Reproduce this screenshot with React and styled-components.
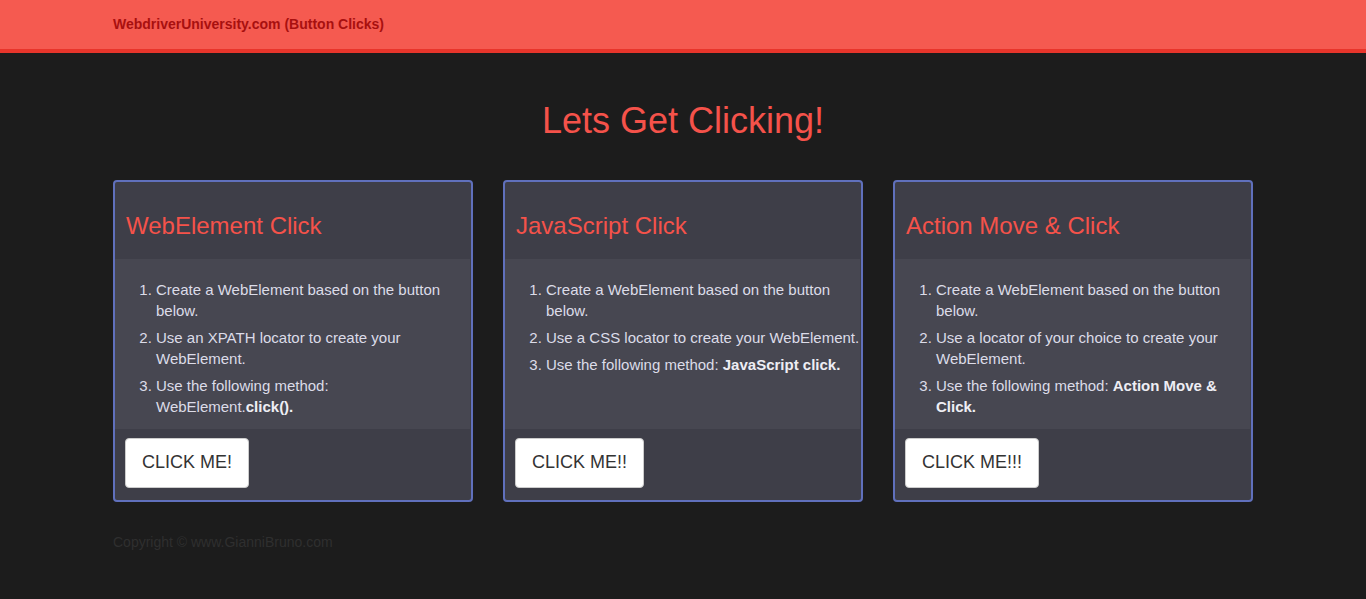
import React from "react";
import styled, { createGlobalStyle } from "styled-components";

const Global = createGlobalStyle`
  html, body { margin: 0; padding: 0; }
  body {
    background: #1c1c1c;
    font-family: "Liberation Sans", Arial, Helvetica, sans-serif;
    font-size: 14px;
    line-height: 1.42857;
    color: #333;
  }
  * { box-sizing: border-box; }
`;

const Navbar = styled.nav`
  height: 53px;
  background: #f55a50;
  border-bottom: 4px solid #e8352b;
`;

const Container = styled.div`
  width: 1140px;
  margin: 0 auto;
`;

const Brand = styled.div`
  height: 49px;
  display: flex;
  align-items: center;
  font-size: 14px;
  font-weight: bold;
  color: #a8100f;
`;

const Title = styled.h1`
  margin: 48px 0 0;
  height: 78px;
  text-align: center;
  font-size: 36px;
  font-weight: normal;
  line-height: 40px;
  color: #f5524a;
`;

const Cards = styled.div`
  display: grid;
  grid-template-columns: repeat(3, 360px);
  gap: 30px;
  margin-top: 1px;
`;

const Card = styled.div`
  display: flex;
  flex-direction: column;
  border: 2px solid #6070bc;
  border-radius: 4px;
  background: #3e3e48;
  overflow: hidden;
`;

const CardHead = styled.div`
  padding: 31px 11px 20px;
`;

const CardTitle = styled.h2`
  margin: 0;
  font-size: 24px;
  font-weight: normal;
  line-height: 26px;
  color: #f5524a;
`;

const CardBody = styled.div`
  flex: 1;
  background: #474751;
  padding: 20px 0 6px;
  margin-right: 1px;
`;

const Steps = styled.ol`
  margin: 0;
  padding: 0 0 0 41px;
  font-size: 15px;
  line-height: 21px;
  color: #dcdce8;

  li { margin-bottom: 6px; }
  b { color: #eeeef4; }
`;

const CardFoot = styled.div`
  padding: 9px 10px 12px;
`;

const Button = styled.button`
  display: inline-block;
  background: #fff;
  border: 1px solid #ccc;
  border-radius: 4px;
  padding: 9px 16px 11px;
  font-family: "Liberation Sans", Arial, sans-serif;
  font-size: 18px;
  line-height: 28px;
  color: #333;
  cursor: pointer;
`;

const Copyright = styled.p`
  margin: 30px 0 0;
  font-size: 14px;
  line-height: 20px;
  color: #2f2f2f;
`;

const cards = [
  {
    title: "WebElement Click",
    steps: [
      "Create a WebElement based on the button below.",
      "Use an XPATH locator to create your WebElement.",
      <>Use the following method: WebElement.<b>click().</b></>,
    ],
    button: "CLICK ME!",
  },
  {
    title: "JavaScript Click",
    steps: [
      "Create a WebElement based on the button below.",
      "Use a CSS locator to create your WebElement.",
      <>Use the following method: <b>JavaScript click.</b></>,
    ],
    button: "CLICK ME!!",
  },
  {
    title: "Action Move & Click",
    steps: [
      "Create a WebElement based on the button below.",
      "Use a locator of your choice to create your WebElement.",
      <>Use the following method: <b>Action Move &amp; Click.</b></>,
    ],
    button: "CLICK ME!!!",
  },
];

export default function App() {
  return (
    <>
      <Global />
      <Navbar>
        <Container>
          <Brand>WebdriverUniversity.com (Button Clicks)</Brand>
        </Container>
      </Navbar>
      <Container>
        <Title>Lets Get Clicking!</Title>
        <Cards>
          {cards.map((c) => (
            <Card key={c.title}>
              <CardHead>
                <CardTitle>{c.title}</CardTitle>
              </CardHead>
              <CardBody>
                <Steps>
                  {c.steps.map((s, i) => (
                    <li key={i}>{s}</li>
                  ))}
                </Steps>
              </CardBody>
              <CardFoot>
                <Button>{c.button}</Button>
              </CardFoot>
            </Card>
          ))}
        </Cards>
        <Copyright>Copyright © www.GianniBruno.com</Copyright>
      </Container>
    </>
  );
}
